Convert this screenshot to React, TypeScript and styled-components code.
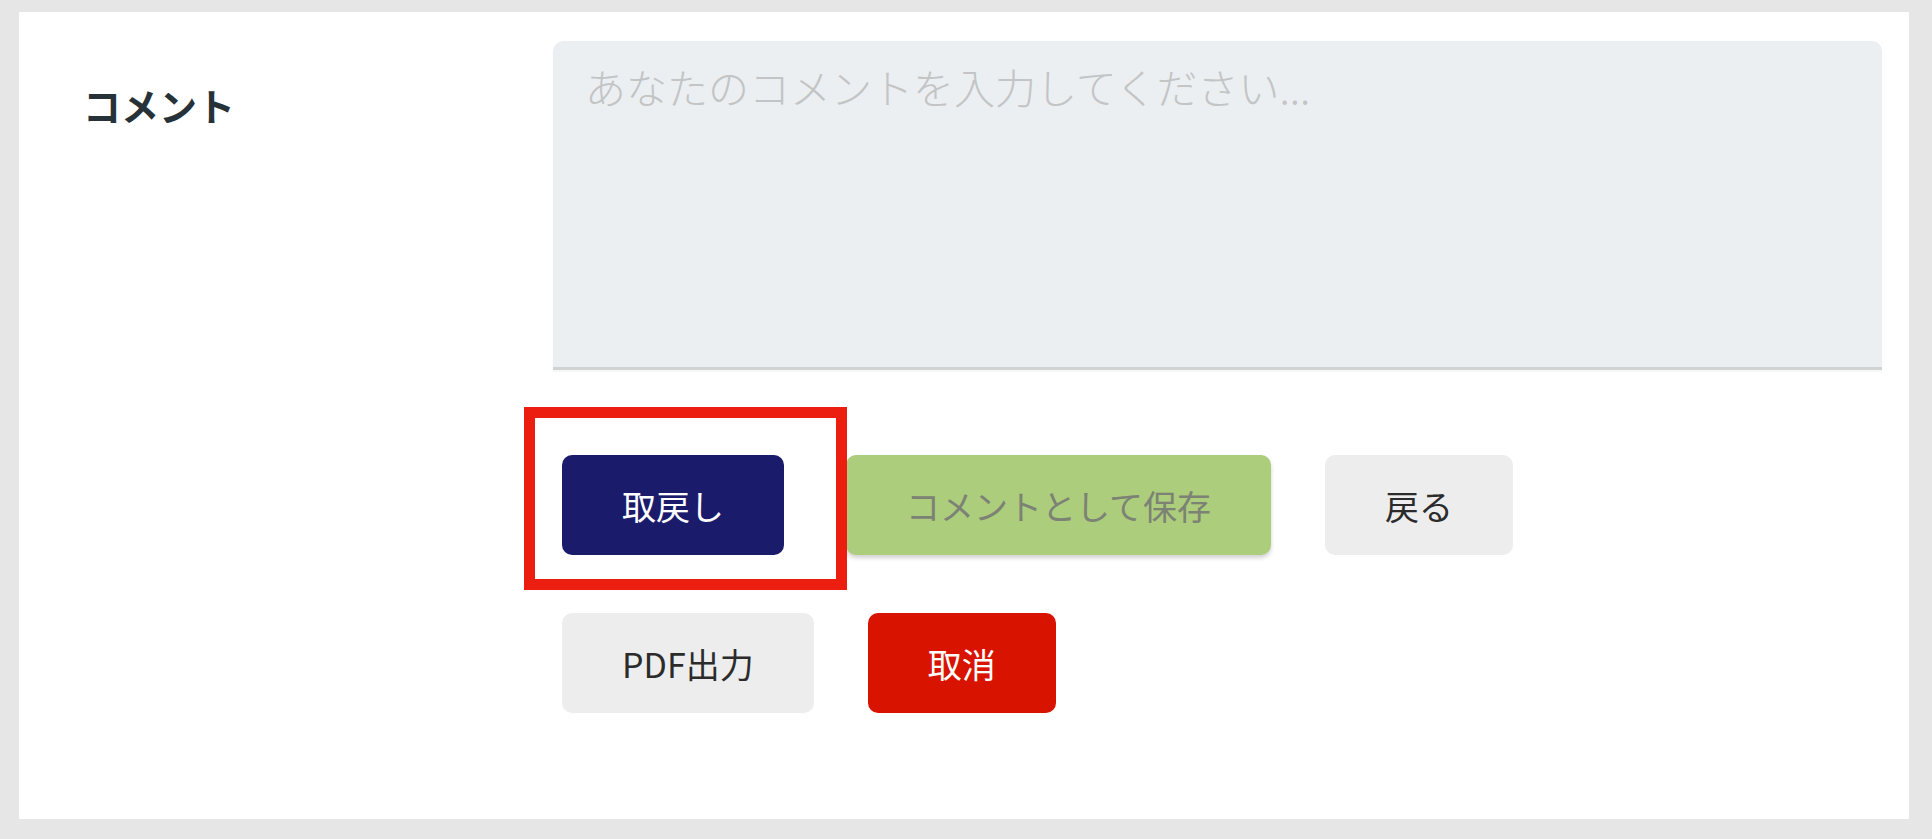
import styled, { createGlobalStyle } from 'styled-components';

const GlobalStyle = createGlobalStyle`
  html, body {
    margin: 0;
    padding: 0;
    background: #e6e6e6;
  }
  body {
    font-family: 'Noto Sans CJK JP', 'Noto Sans', sans-serif;
  }
`;

const Page = styled.div`
  padding: 12px 23px 19px 19px;
  background: #e6e6e6;
`;

const Panel = styled.section`
  display: grid;
  grid-template-columns: 470px 1fr;
  padding: 29px 27px 106px 64px;
  background: #ffffff;
`;

const Label = styled.div`
  padding-top: 36px;
  font-size: 38px;
  font-weight: 700;
  line-height: 55px;
  color: #263238;
`;

const Body = styled.div`
  display: flex;
  flex-direction: column;
`;

const CommentBox = styled.textarea`
  box-sizing: border-box;
  width: 100%;
  height: 329px;
  padding: 16px 32px;
  resize: none;

  font-family: inherit;
  font-size: 41px;
  font-weight: 300;
  line-height: 58px;
  color: #263238;

  background: #eceff1;
  border: none;
  border-bottom: 3px solid #d0d3d4;
  border-radius: 10px 10px 0 0;
  box-shadow: 0 2px 2px rgba(0, 0, 0, 0.04);
  outline: none;

  &::placeholder {
    color: #c2c4c5;
  }
`;

const Actions = styled.div`
  display: flex;
  flex-direction: column;
  gap: 58px;
  margin: 85px 0 0 9px;
`;

const ButtonRow = styled.div`
  display: flex;
  align-items: center;
  gap: 54px;
`;

const Marked = styled.div`
  position: relative;
  display: flex;
  margin-right: 8px;
`;

const Highlight = styled.div`
  position: absolute;
  left: -38px;
  top: -48px;
  width: 323px;
  height: 183px;
  box-sizing: border-box;
  border: 11px solid #ec1e10;
  pointer-events: none;
`;

type Tone = 'navy' | 'green' | 'grey' | 'red';

const tones: Record<Tone, { bg: string; fg: string; shadow: string }> = {
  navy: { bg: '#1b1b6b', fg: '#ffffff', shadow: 'none' },
  green: {
    bg: '#accd7c',
    fg: '#7c8274',
    shadow: '0 3px 4px rgba(0, 0, 0, 0.18)',
  },
  grey: { bg: '#ededed', fg: '#2b2b2b', shadow: 'none' },
  red: { bg: '#d81300', fg: '#ffffff', shadow: 'none' },
};

const Button = styled.button<{ $tone: Tone }>`
  height: 100px;
  padding: 0 60px;
  border: none;
  border-radius: 10px;

  font-family: inherit;
  font-size: 34px;
  font-weight: 400;
  white-space: nowrap;

  background: ${({ $tone }) => tones[$tone].bg};
  color: ${({ $tone }) => tones[$tone].fg};
  box-shadow: ${({ $tone }) => tones[$tone].shadow};
  cursor: pointer;
`;

export default function App() {
  return (
    <>
      <GlobalStyle />
      <Page>
        <Panel>
          <Label>コメント</Label>
          <Body>
            <CommentBox placeholder="あなたのコメントを入力してください..." />
            <Actions>
              <ButtonRow>
                <Marked>
                  <Button $tone="navy">取戻し</Button>
                  <Highlight />
                </Marked>
                <Button $tone="green">コメントとして保存</Button>
                <Button $tone="grey">戻る</Button>
              </ButtonRow>
              <ButtonRow>
                <Button $tone="grey">PDF出力</Button>
                <Button $tone="red">取消</Button>
              </ButtonRow>
            </Actions>
          </Body>
        </Panel>
      </Page>
    </>
  );
}
